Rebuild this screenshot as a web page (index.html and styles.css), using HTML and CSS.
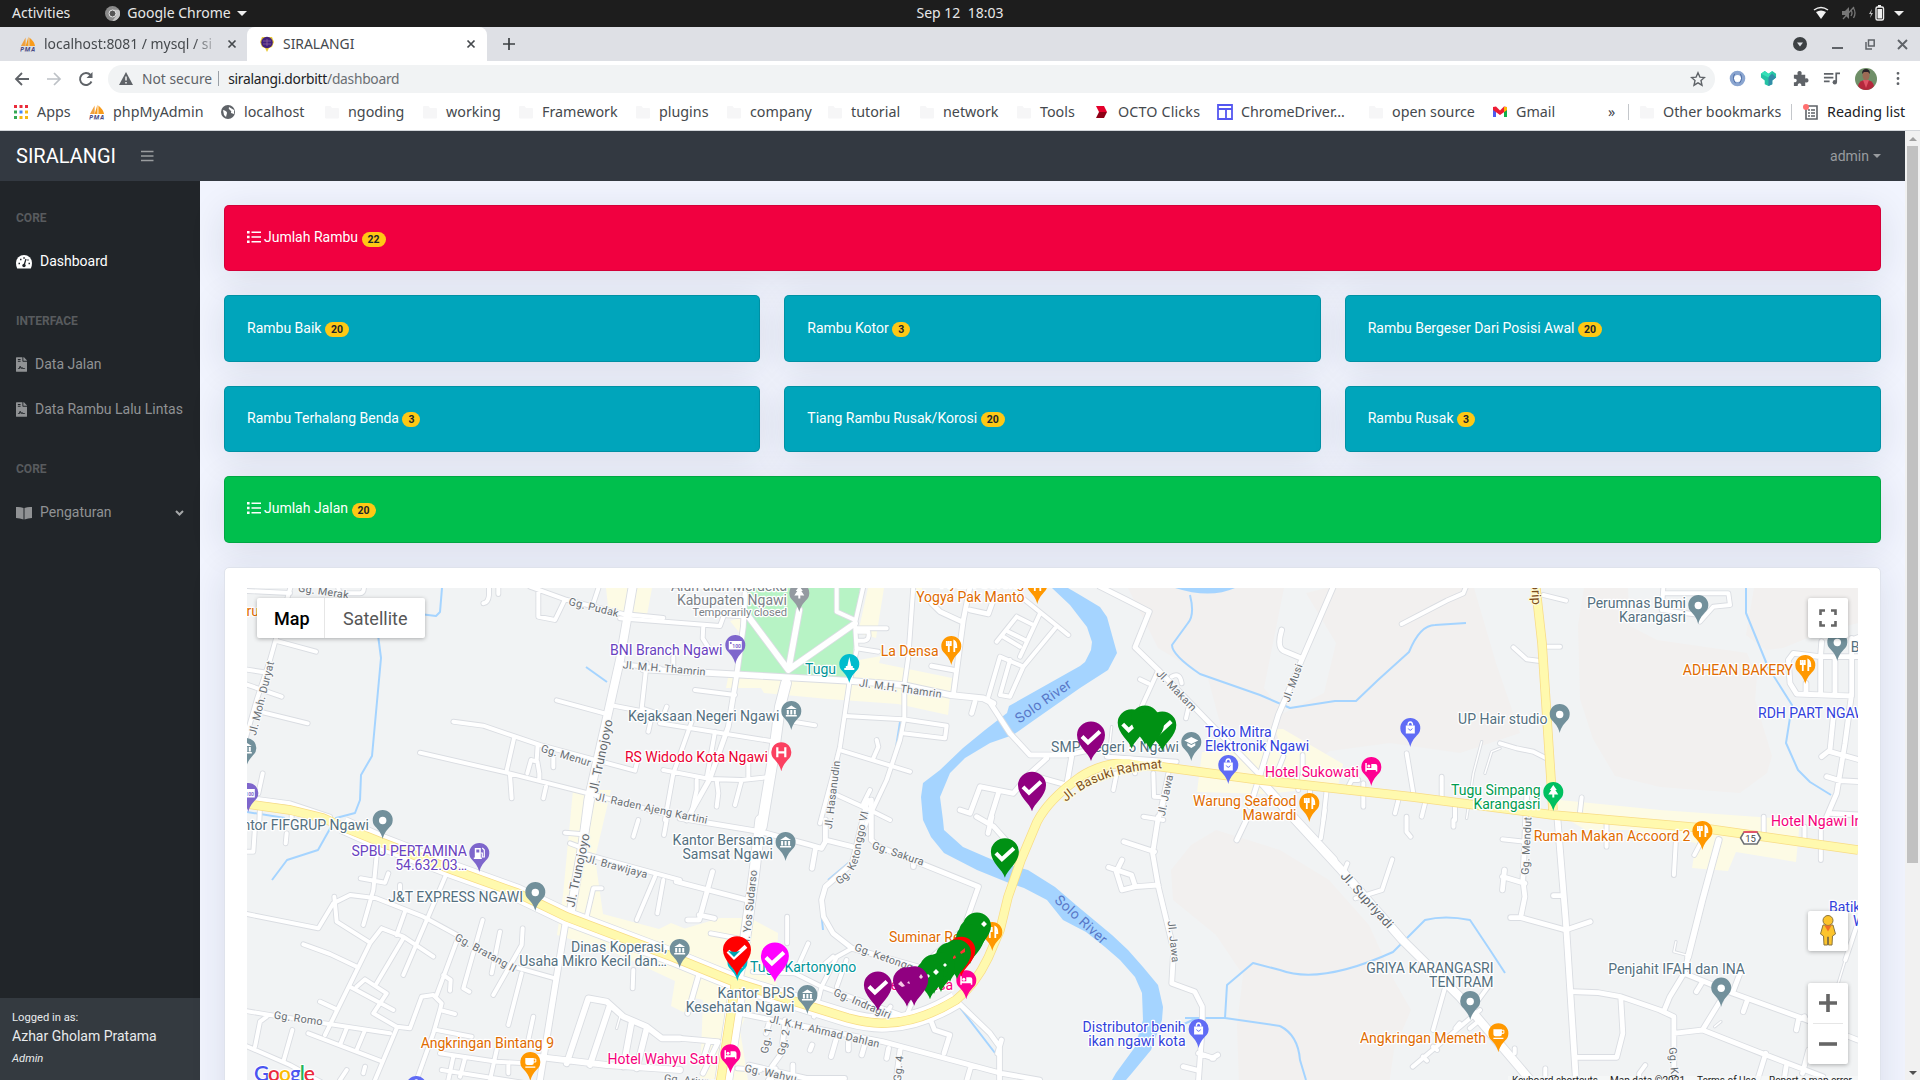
FILE: index.html
```html
<!DOCTYPE html>
<html lang="id">
<head>
<meta charset="utf-8">
<title>SIRALANGI</title>
<link rel="stylesheet" href="styles.css">
</head>
<body>
<svg class="defs" width="0" height="0">
  <defs>
    <symbol id="pma" viewBox="0 0 17 16"><path d="M1 10 6 1v9z" fill="#f0a040"/><path d="M6 10 9 0v10zM10 10V1q5 4 6 9z" fill="#f89c1c"/><text x="0" y="16" font-size="7" font-weight="700" font-style="italic" textLength="16" fill="#4a4a85" font-family="Open Sans, sans-serif">PMA</text></symbol>
    <symbol id="folder" viewBox="0 0 14 13"><path d="M0 1.5Q0 .5 1 .5h4.500l1.500 2h6q1 0 1 1V12q0 1-1 1H1q-1 0-1-1z" fill="#f6f6f7"/></symbol>
    <symbol id="cross" viewBox="0 0 10 10"><path d="M1.500 1.500l7 7m0-7l-7 7" stroke="currentColor" stroke-width="1.700"/></symbol>
    <symbol id="file" viewBox="0 0 384 512"><path fill="currentColor" d="M224 136V0H24C10.700 0 0 10.700 0 24v464c0 13.300 10.700 24 24 24h336c13.300 0 24-10.700 24-24V160H248c-13.200 0-24-10.800-24-24zM64 72c0-4.400 3.600-8 8-8h80c4.400 0 8 3.600 8 8v16c0 4.400-3.600 8-8 8H72c-4.400 0-8-3.600-8-8V72zm0 64c0-4.400 3.600-8 8-8h80c4.400 0 8 3.600 8 8v16c0 4.400-3.600 8-8 8H72c-4.400 0-8-3.600-8-8v-16zm192.800 248H304c8.800 0 16 7.200 16 16s-7.200 16-16 16h-47.200c-16.500 0-31.400-9.200-38.700-23.900-6-12.200-16.600-10.400-20.100 0l-4.600 15.300c-3.600 10.700-18.400 11.300-22.500 1.100L144 354.600l-16.200 48.500c-2.700 7.800-9.800 12.900-18 12.900H80c-8.800 0-16-7.200-16-16s7.200-16 16-16h20.200l19.800-60.500c8.800-24.300 42.300-24.300 49.800 0l13.900 41.700c21-17.100 54-9.900 66.400 14.800 1.300 2.500 3.800 4 6.700 4zM377 105 279.100 7c-4.500-4.500-10.600-7-17-7H256v128h128v-6.100c0-6.300-2.500-12.400-7-16.900z"/></symbol>
    <symbol id="list" viewBox="0 0 14 12"><path fill="currentColor" d="M0 0h2.600v2.600H0zM0 4.700h2.600v2.600H0zM0 9.400h2.600V12H0zM4.500.6H14v1.500H4.500zM4.500 5.300H14v1.500H4.500zM4.500 10H14v1.500H4.500z"/></symbol>
    <path id="pin" d="M0 0C-1.200-5-3-7.500-6.500-11.500A10 10 0 1 1 6.500-11.500C3-7.500 1.200-5 0 0z"/>
    <g id="p-dot"><use href="#pin"/><circle cy="-18.500" r="3.700" fill="#fff"/></g>
    <g id="p-food"><use href="#pin"/><path d="M-4.500-24v4h4v-4M-2.500-24v11M3-13v-11q2 1 2 6H3" fill="none" stroke="#fff" stroke-width="1.800"/></g>
    <g id="p-bank"><use href="#pin"/><path d="M-5.500-21 0-24.500 5.500-21zM-4.500-20h2v4.500h-2zM-1-20h2v4.500h-2zM2.500-20h2v4.500h-2zM-5.500-15h11v1.500h-11z" fill="#fff"/></g>
    <g id="p-bag"><use href="#pin"/><path d="M-4.500-21.500h9v8h-9z" fill="#fff"/><path d="M-2.300-21.500q0-3.500 2.300-3.500t2.300 3.500" fill="none" stroke="#fff" stroke-width="1.300"/><path d="M-2-18.500q2 3.500 4 0" fill="none" stroke="currentColor"/></g>
    <g id="p-bed"><use href="#pin"/><path d="M-6-23h1.500v5H0v-4h4q2 0 2 2v5.500H4.500V-16h-9v1.500H-6z" fill="#fff"/><circle cx="-2.500" cy="-20" r="1.500" fill="#fff"/></g>
    <g id="p-tree"><use href="#pin"/><path d="m0-26 3.500 5H2l3 4.500H1v3h-2v-3h-4L-2-21h-1.500z" fill="#fff"/></g>
    <g id="p-cup"><use href="#pin"/><path d="M-5-23h8.500v5q0 2-2 2h-4.500q-2 0-2-2zM-5-14.500h10v1.300H-5z" fill="#fff"/><path d="M3-22h2.500v3H3" fill="none" stroke="#fff"/></g>
    <g id="p-h"><use href="#pin"/><path d="M-4-24v10M4-24v10M-4-19h8" fill="none" stroke="#fff" stroke-width="2.200"/></g>
    <g id="p-tower"><use href="#pin"/><path d="m0-26 2 9h1.500v2H5v2H-5v-2h1.500v-2H-2z" fill="#fff"/></g>
    <g id="p-note"><use href="#pin"/><path d="M-6.500-23h13v8.500h-13z" fill="#fff"/><text x="-3" y="-16" font-size="5" font-weight="700" fill="currentColor">100</text><circle cx="-4.500" cy="-21" r="1" fill="currentColor"/></g>
    <g id="p-fuel"><use href="#pin"/><path d="M-4.500-24h6v9.500h-6zM-5.500-14.500h8v1.500h-8z" fill="#fff"/><path d="M1.500-19h1.500v4h2v-7l-2-2" fill="none" stroke="#fff" stroke-width="1.200"/><path d="M-3-22.500h3v3h-3z" fill="currentColor"/></g>
    <g id="p-school"><use href="#pin"/><path d="m0-24 7 3.500-7 3.500-7-3.500zM-4-18l4 2 4-2v2.500l-4 2.500-4-2.500z" fill="#fff"/></g>
    <path id="m" d="M0 0C-2-8-14-15-14-26A14 13.500 0 0 1 14-26C14-15 2-8 0 0z"/>
    <g id="mc"><use href="#m"/><path d="m-9-24.500 6 6L9-29.500" fill="none" stroke="#fff" stroke-width="4"/></g>

    <g id="roads">
      <g transform="translate(240 560) scale(.333333)">
        <path d="M0 92 150 99"/><path d="M152 80 90 300 50 420 10 560"/><path d="M110 243 228 275M15 328 80 338M10 370 125 410M60 455 203 490M68 640 55 700"/>
        <path d="M300 100H360Q372 100 372 80M747 80V105Q745 128 730 130M775 80V102M895 90V170L945 180 975 118M870 80 975 118 1150 162 1270 174M1075 85 1060 130M295 85 300 105"/>
        <path d="M950 421 1100 462M1110 435 1260 464M1220 310 1205 445 1250 460M1237 460 1225 515M640 485 730 497 900 555 1185 632 1195 590M540 578 800 638 1045 700 1260 758M822 535 800 632M810 645 815 715M893 555 890 600M940 590V622M862 640 873 600 892 605 898 640V660M918 680 910 715M1140 312 1260 325"/>
        <path class="w8" d="M1178 80 1140 300 1095 500 1045 720 1030 840"/>
        <path d="M35 715 150 730 270 770M60 740 58 785M155 750V790"/>
      </g>
      <g transform="translate(660 560) scale(.333333)">
        <path d="M-120 175 180 198 192 165 262 170M130 195 128 235 145 262"/>
        <path class="w5" d="M255 100 250 200 230 345 205 500 150 655 80 780"/>
        <path class="w6" d="M-50 328 240 344 560 362 730 375 870 405 970 415 1000 430"/>
        <path class="w6" d="M262 165 385 330 418 150M385 330 585 190"/>
        <path d="M530 80V155L585 180M610 80 585 190 590 270 568 370 540 560 520 640 480 790"/>
        <path d="M590 205H680M595 215H625Q630 240 612 242H595M590 265 655 275"/>
        <path class="w10" d="M378 370 360 440 340 590 305 800"/>
        <path d="M40 290V325M105 390 225 405M0 490 345 545M400 485 465 496M95 485 40 640 15 780M10 630 150 657 245 660 320 652M165 515 140 655M265 600V655M110 660 110 690 90 780M170 660 175 700 170 740M245 660 225 735M20 440 5 480"/>
        <path d="M760 80 745 290 733 375V475L720 540 680 660 600 830M555 468 730 478 860 497 855 535 730 520M545 572 750 635M650 540 655 560 640 595M520 700 640 755 690 780M630 690 610 730"/>
        <path class="w5" d="M930 80 910 180 880 405M815 318 880 330M935 460 945 425M815 130 840 155 905 185M930 150 985 162 1000 120"/>
        <path d="M1070 100 1225 225M1070 170 1010 245M1070 170 1120 195M1045 215 1095 240M1030 230 1080 260M1140 160 1080 290M1185 205 1090 320M1090 320 1020 290 985 410M1050 300 1020 405 1050 410 1090 320"/>
        <path class="w5" d="M985 420 1050 520 1110 585 1220 585 1290 570M1160 595 1110 640 1060 700 960 680 930 760 900 750M1015 700 990 780M1130 650 1220 675 1235 590"/>
      </g>
      <g transform="translate(1080 560) scale(.333333)">
        <path class="w5" d="M60 80 140 120 208 155 165 262 235 330 540 645"/>
        <path d="M235 330 185 440 170 480M180 358 205 370M275 350Q300 335 305 370M325 445 318 475"/>
        <path class="w5" d="M760 80 665 300 595 465 540 645 510 740M605 210Q590 260 610 272L665 295"/>
        <path d="M965 192 1100 122 1150 100 1158 80"/><path d="M80 590 290 605M80 650 110 640 100 690M160 615 165 640M220 640 222 710 255 712 235 780M265 640 235 780M190 770 250 780"/>
        <path class="w8" d="M540 660 620 750 760 900"/>
        <path d="M610 590 590 640M668 585V640M740 690 730 780M690 690V700M850 670V740M805 680 815 660H835M980 580 1000 700M1085 650V710M955 720 945 760M1035 730 1025 770M1125 730V780M650 640 655 690"/>
        <path class="w2" d="M1260 565 1235 575 1215 640M1205 545 1180 640 1160 775M95 500 85 590"/>
      </g>
      <g transform="translate(1500 560) scale(.333333)">
        <path d="M130 105 198 122M40 262 80 298 120 303M135 260H180M0 550 50 565 100 575 145 598M490 84 485 150 600 165M490 100H685L690 135 640 140 600 185M245 712 240 755"/>
        <path class="w5" d="M1080 290H960L880 280 865 300 870 370 890 402 1055 408M962 290V400M1005 290V400M962 285 965 245M1055 235V400L1035 550 1010 700 980 770M1000 470 990 570 965 590M990 575 1080 600M980 650 1020 662 1080 665M990 760 1080 765M1080 230 1055 240M918 370V400"/>
      </g>
      <g transform="translate(240 820) scale(.333333)">
        <path d="M45 20 40 95H0M140 40 137 70M412 85 400 210 370 315M362 175 435 188 445 160M480 195V230M283 230 290 305 390 368M0 278 235 325 280 250 330 225 410 235 550 290 660 350M820 440 945 475"/>
        <path d="M620 160 490 465M495 275 470 345M190 373 270 402 350 440M425 325 490 350 580 410M425 325 390 370 255 645M490 355 410 490M240 545 290 568M330 500 460 570M350 500 375 478 440 520 400 580M400 580 470 620 510 625 545 530 580 525 605 550 600 570 645 582M655 350 590 525M610 465 632 480 630 512M600 570 580 640 530 780"/>
        <path d="M728 300 670 505 688 515M780 335 755 460M848 325 845 375 760 525M845 460 805 615M880 590 865 660"/>
        <path d="M0 570 90 585 450 640M0 670 150 735 250 790M80 590 60 605 45 680M157 630 130 725M205 640 420 722M320 625 300 675M375 630 350 690M470 625 405 780M320 750 300 780M375 740 370 760M590 630 695 650M600 700 770 725 860 730M640 710 625 780M675 715 660 770M605 750 860 790M805 735V760M770 690 750 780"/>
        <path class="w6" d="M978 300 945 500 900 780"/><path class="w6" d="M890 710 1100 735 1320 750M980 730 1045 535 1100 545 1150 590 1220 620 1265 655H1320M1110 555 1050 735M1175 605 1150 740M1220 625 1190 745"/>
        <path class="w2" d="M1140 590 1130 625"/><path d="M1180 450 1178 505"/>
        <path class="w8" d="M1050-60 990 290"/><path d="M1040 290 1060 205H1085M975 38 1020 42M990 70 1030 85"/>
        <path d="M1030 100 1100 120 1320 180M1245 170 1190 300M1270 180 1252 280M1195 0 1180 50M1280 0 1272 45"/>
      </g>
      <g transform="translate(680 820) scale(.382667 .333333)">
        <path class="w5" d="M0-5 210 35 340 75 370 85 380 65V0M-10 185 175 240M85 155 50 300 20 300M50 285 90 295M355 80 345 145M380 60 450 80"/>
        <path class="w10" d="M210 0 195 150 165 400 150 480"/>
        <path class="w5" d="M490-60 450 130 380 200 370 240 375 290 400 340 450 385 620 440M500-60V60L520 80 780 200 740 330 650 420M610 120V140M775-10 820 20 890 110M805 40 815-10"/>
        <path d="M80 340 150 355M280 290V370M335 370 300 460M450 385 410 410 370 500 350 590M380 430 400 410M435 420 410 500M370 500 300 460 190 455M370 500 590 590 610 540M550 560 530 590"/>
        <path class="w5" d="M155 580 240 600 530 665 840 760 940 780M50 460 20 580M0 655 100 665 60 760M75 665 60 720M235 600 225 640M410 650 395 710M440 655V690M485 665 475 705M545 685 540 715M575 690 565 780M760 740 750 780M340 690 345 675"/>
        <path class="w5" d="M720 540 810 640 835 680V780M655 600 665 630 705 645 690 700M840 660 830 700M275 600 265 700 240 740 240 780M180 735 330 775 430 775M295 735V760"/>
        <path d="M365 520 355 560M250 745 230 780M150 745 210 750"/>
        <path class="w5" d="M1250-10 1235 100 1250 200 1290 390 1285 490 1345 515 1365 560V620L1355 780M1160 65 1240 95M1120 142 1180 165 1190 200 1250 195M1155 120 1140 155 1155 210 1190 200M1390 715 1405 705M1355 700 1395 715M1315 740 1350 750M1480 0 1455 60"/>
      </g>
      <g transform="translate(1280 820) scale(.408163 .333333)">
        <path class="w8" d="M0-50 150 150 300 360 440 530 620 790"/>
        <path d="M110-30 100 55M165 130 155 160M275 118 250 210 185 235M310-10V35L320 50M425 0V20M545 58 600 65"/>
        <path class="w5" d="M605-80 595 180 600 230 590 290M565 293 590 293 700 330 760 305M550 150 545 210M545 170 600 190"/>
        <path class="w6" d="M680 0 700 300 725 780"/><path class="w5" d="M670 227H695M715 515 780 518 835 530 930 570 965 590 965 780M835 535 840 640 825 712H725M965 640 1035 630 1180 700 1330 770M1080 540 1035 630M990 460 955 530 940 575M1000 410 990 460 1110 520 1280 595 1415 660M1035 485 1020 515M1110 515 1130 450M1145 540 1135 575M1285 590 1270 600 1265 630M1190 700 1170 780M1240 740 1235 780M1295 690 1280 760"/>
        <path class="w6" d="M1075 60 1035 240 1000 410"/><path d="M970 60 965 165M1030 70 1015 105M800 10V80M1185-10V40M1285 20V60M1325 20V120M1415 310 1385 420"/>
        <path class="w2" d="M970 365 965 395 995 405M1385 420 1365 500M1065 620 1080 605"/>
        <path d="M405 500 375 630M490 570 325 740M510 500 480 550M440 610 430 625M375 680 385 690M350 710 360 722M490 600 465 625M575 685V700M650 745V780M895 735 880 760V780"/>
      </g>
    </g>
    <path id="hw" d="M247 804 290 810 323 818 343 827 383 843 453 870 517 893 567 917 673 957 737 983 806 1005 848 1018Q870 1024 887 1023 920 1022 956 1000 975 985 988 958L1000 930 1008 897 1021 860 1037 822Q1048 800 1080 777 1100 764 1123 763L1163 767 1260 780 1413 797 1553 815 1702 828 1858 850M1535 580 1542 643 1553 810M736 980 720 1085"/>
    <path id="dual" d="M343 825 383 843 453 870 517 893 567 917 673 957 737 983 806 1005 848 1018Q870 1024 887 1023 920 1022 956 1000M739 980 723 1085"/>
    <path id="kv" d="M839 885Q859 872 861 846L872 796"/>
    <path id="br" d="M1066 802Q1098 772 1164 768"/>
  </defs>
</svg>

<header class="topbar">
  <div class="topbar-left"><span>Activities</span><svg class="chrome-ico" viewBox="0 0 16 16"><circle cx="8" cy="8" r="8" fill="#8a8a8a"/><path d="M8 4h7A8 8 0 0 1 8 16l4-6z" fill="#c4c4c4"/><circle cx="8" cy="8" r="3.700" fill="#555" stroke="#eee"/></svg><span>Google Chrome</span><i class="caret"></i></div>
  <span class="clock">Sep 12&nbsp; 18:03</span>
  <div class="topbar-right">
    <svg width="16" height="14"><path d="M1 4q7-5 14 0" fill="none" stroke="#eee" stroke-width="1.500"/><path d="M3 6q5-3 10 0l-5 7z" fill="#f2f2f2"/></svg>
    <svg width="16" height="14"><path d="M1 5h3l4-4v12L4 9H1z" fill="#777"/><path d="M10 4q2 3 0 6M12.500 2q3 5 0 10M13 1 2 13" fill="none" stroke="#777" stroke-width="1.300"/></svg>
    <svg width="16" height="16"><path d="M3 4 0 9h2l-1 4 3-5H2z" fill="#bbb"/><rect x="7" y="2" width="7.500" height="13" rx="1.500" fill="none" stroke="#eee" stroke-width="1.400"/><path d="M9 0h3v2H9zM8.500 4h4.500v9.500H8.500z" fill="#eee"/></svg>
    <i class="caret"></i>
  </div>
</header>

<div class="tabs">
  <div class="tab tab-a"><svg class="fav" viewBox="0 0 17 16"><use href="#pma"/></svg><span class="tab-name fade">localhost:8081 / mysql / si</span><svg class="x"><use href="#cross"/></svg></div>
  <div class="tab tab-b"><svg class="fav" viewBox="0 0 16 16"><path d="M3 1h10l2 5-2 5-3 1-2 4-2-4-3-1-2-5z" fill="#e9c936"/><circle cx="8" cy="6.500" r="5.800" fill="#41207c"/><path d="M4 5h8M4 8h8M8 3v7" stroke="#9a6ba0" stroke-width=".7"/></svg><span class="tab-name">SIRALANGI</span><svg class="x"><use href="#cross"/></svg></div>
  <svg class="plus" viewBox="0 0 12 12"><path d="M6 0v12M0 6h12" stroke="#3c4043" stroke-width="1.700"/></svg>
  <div class="wins">
    <svg width="14" height="14"><circle cx="7" cy="7" r="7" fill="#3c4043"/><path d="M4 5.500h6L7 9.500z" fill="#dee1e6"/></svg>
    <svg width="11" height="14"><path d="M0 11h11" stroke="#5f6368" stroke-width="2"/></svg>
    <svg width="10" height="11"><path d="M3.500 1h5.700v6H3.500zM1 3v7h6" fill="none" stroke="#5f6368" stroke-width="1.500"/></svg>
    <svg width="11" height="11"><path d="m1 1 9 9m0-9-9 9" stroke="#5f6368" stroke-width="1.900"/></svg>
  </div>
</div>

<div class="addr">
  <svg class="nav" viewBox="0 0 16 16"><path d="M15 8H2M8 2 2 8l6 6" fill="none" stroke="#5f6368" stroke-width="1.800"/></svg>
  <svg class="nav" viewBox="0 0 16 16"><path d="M1 8h13M8 2l6 6-6 6" fill="none" stroke="#bdc1c6" stroke-width="1.700"/></svg>
  <svg class="nav" viewBox="0 0 16 16"><path d="M13.500 10.500A6 6 0 1 1 12.500 4" fill="none" stroke="#5f6368" stroke-width="1.900"/><path d="M14.500 1v6h-6z" fill="#5f6368"/></svg>
  <div class="omni">
    <svg width="14" height="13"><path d="M7 0l7 13H0z" fill="#5f6368"/><path d="M7 4.500v4M7 10v1.500" stroke="#fff" stroke-width="1.400"/></svg>
    <span class="ns">Not secure</span><i class="bar"></i><span class="url">siralangi.dorbitt<em>/dashboard</em></span>
    <svg class="star" viewBox="0 0 16 16"><path d="m8 1.800 1.900 4.300 4.600.4-3.500 3.100 1 4.600L8 11.800l-4 2.400 1-4.600L1.500 6.500l4.600-.4z" fill="none" stroke="#5f6368" stroke-width="1.400"/></svg>
  </div>
  <div class="exts">
    <svg viewBox="0 0 18 18"><circle cx="9" cy="9" r="6" fill="none" stroke="#8aa5d0" stroke-width="4.500"/><path d="M6 4q-3 5 1 10M12 4q3 5-1 10" fill="none" stroke="#4c6ca5"/></svg>
    <svg viewBox="0 0 18 18"><path d="M1 4 5 1l4 3 4-3 4 3v4l-4 3v4l-4 2-4-2v-4L1 8z" fill="#25c3a5"/><path d="m9 7 4-3 4 4-4 3v4l-4 2z" fill="#338ca8"/><path d="M1 4 5 1l4 3 4-3-4 7z" fill="#35e0b8"/></svg>
    <svg viewBox="0 0 18 18"><path d="M2 5h4q-1-4 2-4t2 4h4v4q3.500-1 3.500 2T14 13v4h-4q0-3-2-3t-2 3H2v-4q3 0 3-2T2 9z" fill="#5f6368"/></svg>
    <svg viewBox="0 0 18 18"><path d="M1 4h10M1 8h10M1 12h6M14 13V3.500h4" fill="none" stroke="#5f6368" stroke-width="1.800"/><circle cx="12.500" cy="13" r="2.300" fill="#5f6368"/></svg>
    <svg class="avatar" viewBox="0 0 22 22"><circle cx="11" cy="11" r="11" fill="#6f8f68"/><path d="M3 18q1-6 8-6t8 6q-3 4-8 4t-8-4z" fill="#b5283c"/><path d="m8 12 3 8 3-8z" fill="#e05366"/><ellipse cx="11" cy="7.500" rx="3.500" ry="4.800" fill="#9c6b55"/><path d="M7 6q0-5 4-5t4 5l-2-2H9z" fill="#2a2329"/></svg>
    <svg viewBox="0 0 12 18"><path d="M6 3.500h0M6 9h0M6 14.500h0" stroke="#5f6368" stroke-width="3" stroke-linecap="round"/></svg>
  </div>
</div>

<nav class="marks">
  <div><svg viewBox="0 0 14 14"><path d="M0 0h3v3H0zM5.500 0h3v3h-3zM11 0h3v3h-3z" fill="#ea2b3a"/><path d="M0 5.500h3v3H0z" fill="#34a853"/><path d="M5.500 5.500h3v3h-3z" fill="#4285f4"/><path d="M11 5.500h3v3h-3zM5.500 11h3v3h-3zM11 11h3v3h-3z" fill="#f5b912"/><path d="M0 11h3v3H0z" fill="#34a853"/></svg>Apps</div>
  <div><svg viewBox="0 0 17 16"><use href="#pma"/></svg>phpMyAdmin</div>
  <div><svg viewBox="0 0 14 14"><circle cx="7" cy="7" r="7" fill="#5f6368"/><path d="M2 5q4 1 4 3l-1 4-2-2zM8 2q-1 2 1 3t1 3l3 1V5z" fill="#fff"/></svg>localhost</div>
  <div><svg><use href="#folder"/></svg>ngoding</div>
  <div><svg><use href="#folder"/></svg>working</div>
  <div><svg><use href="#folder"/></svg>Framework</div>
  <div><svg><use href="#folder"/></svg>plugins</div>
  <div><svg><use href="#folder"/></svg>company</div>
  <div><svg><use href="#folder"/></svg>tutorial</div>
  <div><svg><use href="#folder"/></svg>network</div>
  <div><svg><use href="#folder"/></svg>Tools</div>
  <div><svg viewBox="0 0 14 14"><path d="M1 1h8l3 6H4z" fill="#e4002b"/><path d="M4 7h8l-3 6H1z" fill="#8e0016"/></svg>OCTO Clicks</div>
  <div><svg viewBox="0 0 16 16"><path d="M1 1h14v14H1zM1 5h14M9 5v10" fill="none" stroke="#5457f0" stroke-width="1.800"/></svg>ChromeDriver…</div>
  <div><svg><use href="#folder"/></svg>open source</div>
  <div><svg viewBox="0 0 14 14"><path d="M0 2h3v10H0z" fill="#4f5cf0"/><path d="M11 2h3v10h-3z" fill="#10b04a"/><path d="m0 2 3-.5 4 4 4-4 3 .5v3L7 10 0 5z" fill="#ee1c35"/><path d="M11 2h3v3l-3 2z" fill="#fbbc04"/></svg>Gmail</div>
  <div class="more">»</div>
  <div class="sep"><svg><use href="#folder"/></svg>Other bookmarks</div>
  <div class="sep reading"><svg viewBox="0 0 16 16"><path d="M3 2h11v13H3z" fill="none" stroke="#5f6368" stroke-width="1.600"/><path d="M5 6h2M8 6h4M5 9h2M8 9h4M5 12h2M8 12h4" stroke="#5f6368" stroke-width="1.500"/><circle cx="3" cy="3" r="3" fill="#ff7070"/></svg>Reading list</div>
</nav>

<div class="view">
  <div class="page">
    <header class="appbar"><span class="brand">SIRALANGI</span><svg width="13" height="13"><path d="M0 1.500h12.500M0 6h12.500M0 10.500h12.500" stroke="#9a9d9f" stroke-width="1.500"/></svg><span class="user">admin<i class="dd"></i></span></header>
    <div class="body">
      <aside class="side">
        <h6>CORE</h6>
        <a class="on"><svg width="16" height="14" viewBox="0 0 16 14"><path d="M0 8a8 8 0 0 1 16 0q0 3-1.200 5.500H1.200Q0 11 0 8z" fill="#fff"/><path d="M8 10.500 10 4" stroke="#212529" stroke-width="1.300"/><circle cx="8" cy="10.500" r="1.700" fill="#212529"/><path d="M2.500 8.500h1.500M12.500 8.500h1.500M4 4.500h1.500M7.300 3h1.500M11.500 5h1" stroke="#212529" stroke-width="1.500"/></svg>Dashboard</a>
        <h6>INTERFACE</h6>
        <a><svg width="11" height="15"><use href="#file"/></svg>Data Jalan</a>
        <a><svg width="11" height="15"><use href="#file"/></svg>Data Rambu Lalu Lintas</a>
        <h6>CORE</h6>
        <a><svg width="16" height="14" viewBox="0 0 16 14"><path d="M0 1q4-.5 7.500 1v11.500Q4 12 0 12zM16 1q-4-.5-7.500 1v11.500Q12 12 16 12z" fill="currentColor"/></svg>Pengaturan<svg class="chev" width="9" height="8"><path d="m1 2 3.500 3.500L8 2" fill="none" stroke="#a5a7a8" stroke-width="2"/></svg></a>
        <footer><small>Logged in as:</small><span>Azhar Gholam Pratama</span><small><em>Admin</em></small></footer>
      </aside>
      <main>
        <div class="card red"><svg width="14" height="12"><use href="#list"/></svg>Jumlah Rambu <b>22</b></div>
        <div class="card">Rambu Baik <b>20</b></div><div class="card">Rambu Kotor <b>3</b></div><div class="card">Rambu Bergeser Dari Posisi Awal <b>20</b></div>
        <div class="card">Rambu Terhalang Benda <b>3</b></div><div class="card">Tiang Rambu Rusak/Korosi <b>20</b></div><div class="card">Rambu Rusak <b>3</b></div>
        <div class="card green"><svg width="14" height="12"><use href="#list"/></svg>Jumlah Jalan <b>20</b></div>
        <section class="mapcard"><div class="map">
<svg class="canvas" viewBox="247 588 1611 492" width="1611" height="492">
  <rect x="247" y="588" width="1611" height="492" fill="#f1f3f4"/>
  <g fill="#f2f0ef">
    <path d="M1152 588h132l-12 60-8 40 20 25 40-20 12-50-30-50 20-5h148l22 75 24 70-60 20-70-10-60 8-20 14-30-22-60-20-12-45-50-30-30-60z"/>
    <path d="M1584 588h44l2 38 27 14 90 13 10 24-2 23 17 56-5 17-27 20-80-6-45-11-22-37-13-40-2-74zM1754 588h104v35l-38 10-37 15-17 2-20-15z"/>
    <path d="M1216 830l-25 15-20 25 2 30 43 35 27 40-6 50 2 60h150l5-35 17-40-17-30-25-55-40-45-49-30z"/>
  </g>
  <g fill="#fdfbe5">
    <path d="M606 588h46l-5 27h-38zM730 621l15-5-3 20zM868 588h16l-8 50-18-5zM912 588h10v3zM859 660l22-4-2 7 73 15-4 37-50-11-70-5-64-6-3-5h-35l3-15z"/>
    <path d="M573 790h38l-16 68 8 56 56 15 12-6 20 8v85l-20-10 4-25-60-28-58-18 6-40zM680 930l40-12h30l28 15-2 60 20 15-48 2-8 20 8 50h-48l3-80-23-5z"/>
    <path d="M1202 752l78-8-5-15h8l60 35-5 22-70 8-71-2zM1560 800l100 10 140 10-4 42-60-10-8 19-36-3 4-25-50-10-14-3h-46l-35-20z"/>
  </g>
  <path fill="#b7f3c5" d="M748 588h112l-10 95-105-8-8-6z"/>
  <path fill="#a5d4ff" d="M1068 588 1080 595 1100 607 1107 617 1117 653 1108 670 1080 688 1030 723 1013 735 990 743 965 758 950 773 940 797 943 820 944 830 963 847 986 857 998 862 1028 870 1055 887 1076 905 1112 935 1128 950 1143 967 1158 985 1163 1007 1162 1020 1151 1050 1132 1073 1126 1080H1112L1116 1073 1135 1047 1143 1020 1142 993 1135 977 1120 960 1105 947 1086 932 1063 920 1047 900 1024 888 1009 883 977 870 944 853 931 837 923 820 921 797 923 783 940 770 963 748 985 730 1007 713 1009 706 1080 666 1085 662 1091 650 1092 642 1087 627 1080 618 1070 605 1052 588zM1175 588q35 11 60 0z"/>
  <g class="stream">
    <path d="M442 588 440 612 436 616 420 614M378 635 381 658 372 756 361 775 360 800 355 813 336 818 318 850 287 860 272 880M586 667 607 682M913 588 908 650M900 722 894 760M247 812 285 818"/>
    <path d="M1190 595Q1195 615 1188 623L1172 645Q1172 655 1200 674L1260 695 1290 708 1335 701 1356 701 1378 680 1409 652Q1420 625 1435 625L1466 623"/>
    <path d="M1746 588V613L1768 667 1792 705 1786 743 1798 770 1810 782 1831 795"/>
    <path d="M1185 1018H1225L1280 1026M1225 1018 1227 985 1253 963 1280 970Q1320 985 1393 952L1425 920Q1445 915 1470 920L1490 950 1505 973M1280 1026Q1298 1035 1300 1060L1306 1080M1184 1024 1197 1018M829 930 847 947M958 1005 995 1053M852 860 828 880M821 910 823 930"/>
  </g>
  <use href="#roads" class="casing"/>
  <use href="#dual" class="dual-c"/>
  <use href="#roads" class="paved"/>
  <use href="#dual" class="dual-f"/>
  <use href="#hw" class="hw-c"/><use href="#hw" class="hw-f"/>
  <path d="M1112 757 1130 758 1162 763" stroke="#fff" stroke-width="3" fill="none"/>
  <g class="st">
    <text transform="translate(323 595) rotate(8)">Gg. Merak</text><text transform="translate(593 611) rotate(14)">Gg. Pudak</text>
    <text transform="translate(265 699) rotate(-76)">Jl. Moh. Duryat</text><text transform="translate(664 672) rotate(5)">Jl. M.H. Thamrin</text>
    <text transform="translate(900 692) rotate(8)">Jl. M.H. Thamrin</text><text transform="translate(836 795) rotate(-83)">Jl. Hasanudin</text>
    <text class="b" transform="translate(605 757) rotate(-78)">Jl. Trunojoyo</text><text class="b" transform="translate(582 871) rotate(-78)">Jl. Trunojoyo</text>
    <text transform="translate(565 759) rotate(17)">Gg. Menur</text><text transform="translate(651 812) rotate(12)">Jl. Raden Ajeng Kartini</text>
    <text transform="translate(616 870) rotate(15)">Jl. Brawijaya</text><text transform="translate(484 956) rotate(29)">Gg. Bratang II</text>
    <text transform="translate(298 1022) rotate(8)">Gg. Romo</text><text transform="translate(753 909) rotate(-84)">Jl. Yos Sudarso</text>
    <text class="start"><textPath href="#kv">Gg. Ketonggo VI</textPath></text><text transform="translate(897 857) rotate(19)">Gg. Sakura</text>
    <text transform="translate(892 964) rotate(20)">Gg. Ketonggo VI</text><text transform="translate(861 1007) rotate(23)">Gg. Indragiri</text>
    <text transform="translate(824 1035) rotate(13)">Jl. K.H. Ahmad Dahlan</text><text transform="translate(770 1041) rotate(-80)">Gg. 1</text><text transform="translate(787 1043) rotate(-78)">Gg. 2</text><text transform="translate(902 1069) rotate(-84)">Gg. 4</text>
    <text transform="translate(770 1077) rotate(12)">Gg. Wahyu</text><text transform="translate(690 1084) rotate(5)">Gg. Arjuno</text>
    <text transform="translate(1174 693) rotate(46)">Jl. Makam</text><text transform="translate(1296 684) rotate(-70)">Jl. Musi</text><text transform="translate(1169 796) rotate(-78)">Jl. Jawa</text><text transform="translate(1170 942) rotate(84)">Jl. Jawa</text>
    <text class="b" transform="translate(1364 903) rotate(48)">Jl. Supriyadi</text><text transform="translate(1530 846) rotate(-87)">Gg. Mendut</text><text transform="translate(1671 1075) rotate(86)">Gg. Kresno</text>
    <text class="hwt start"><textPath href="#br">Jl. Basuki Rahmat</textPath></text><text class="hwt" transform="translate(1530 559) rotate(87)">Jl. Urip Sumorip</text>
    <text class="rv" transform="translate(1046 705) rotate(-35)">Solo River</text><text class="rv" transform="translate(1078 923) rotate(42)">Solo River</text>
  </g>
  <g class="poi">
    <g class="gray"><use href="#p-tree" x="799.300" y="612"/><g class="e"><text x="787" y="591">Alun-alun Merdeka</text><text x="787" y="605">Kabupaten Ngawi</text><text class="s" x="787" y="616">Temporarily closed</text></g></g>
    <g class="orange"><use href="#p-food" x="1037.300" y="604"/><use href="#p-food" x="951.300" y="665"/><use href="#p-food" x="1309.300" y="822"/><use href="#p-food" x="1805.300" y="684"/><use href="#p-cup" x="530.300" y="1081"/><use href="#p-food" x="992.300" y="951"/><use href="#p-cup" x="1498.400" y="1052.300"/><use href="#p-food" x="1702.400" y="850"/>
      <g class="e"><text x="1024.500" y="588">Ayam Goreng</text><text x="1024.500" y="602">Yogya Pak Manto</text><text x="938.500" y="656">La Densa</text><text x="1296.500" y="806">Warung Seafood</text><text x="1296.500" y="820">Mawardi</text><text x="1793" y="675">ADHEAN BAKERY</text><text x="554" y="1048">Angkringan Bintang 9</text><text x="1486" y="1043">Angkringan Memeth</text><text x="1690.500" y="841">Rumah Makan Accoord 2</text><text x="259" y="616">Waru</text></g><text x="889" y="942">Suminar Resto</text></g>
    <g class="purple"><use href="#p-note" x="735.300" y="664"/><use href="#p-note" x="248.300" y="812"/><use href="#p-fuel" x="479.300" y="872"/><g class="e"><text x="722.500" y="655">BNI Branch Ngawi</text><text x="467" y="856">SPBU PERTAMINA</text><text x="467" y="870">54.632.03…</text></g></g>
    <g class="teal"><use href="#p-tower" x="849.300" y="683"/><use href="#p-tower" x="737.400" y="981"/><text class="end" x="836" y="674">Tugu</text><text x="750" y="972">Tugu Kartonyono</text></g>
    <g class="red-p"><use href="#p-h" x="781.300" y="771.300"/><text class="end" x="768" y="762">RS Widodo Kota Ngawi</text></g>
    <g class="slate"><use href="#p-bank" x="791.300" y="730"/><use href="#p-school" x="1191.300" y="761"/><use href="#p-dot" x="1698.300" y="624"/><use href="#p-dot" x="1837.300" y="661"/><use href="#p-dot" x="1559.700" y="733"/><use href="#p-bank" x="246.300" y="767"/><use href="#p-dot" x="382.700" y="839"/><use href="#p-dot" x="535.300" y="911"/><use href="#p-bank" x="679.700" y="968"/><use href="#p-bank" x="785.600" y="861"/><use href="#p-bank" x="807.400" y="1014"/><use href="#p-dot" x="1470.200" y="1020"/><use href="#p-dot" x="1721.200" y="1006.700"/>
      <g class="e"><text x="779.500" y="721">Kejaksaan Negeri Ngawi</text><text x="1179" y="752">SMP Negeri 5 Ngawi</text><text x="1686" y="608">Perumnas Bumi</text><text x="1686" y="622">Karangasri</text><text x="1547.500" y="724">UP Hair studio</text><text x="369" y="830">Kantor FIFGRUP Ngawi</text><text x="523" y="902">J&amp;T EXPRESS NGAWI</text><text x="667" y="952">Dinas Koperasi,</text><text x="667" y="966">Usaha Mikro Kecil dan…</text><text x="773" y="845">Kantor Bersama</text><text x="773" y="859">Samsat Ngawi</text><text x="794.500" y="998">Kantor BPJS</text><text x="794.500" y="1012">Kesehatan Ngawi</text><text x="1493.500" y="973">GRIYA KARANGASRI</text><text x="1493.500" y="987">TENTRAM</text><text x="1745" y="974">Penjahit IFAH dan INA</text></g><text x="1850.700" y="652">Bale</text></g>
    <g class="blue"><use href="#p-bag" x="1228.300" y="784"/><use href="#p-bag" x="1410.300" y="747"/><use href="#p-bag" x="416.300" y="1105"/><use href="#p-bag" x="1198.600" y="1048"/><text x="1205" y="737">Toko Mitra</text><text x="1205" y="751">Elektronik Ngawi</text><text x="1758" y="718">RDH PART NGAWI</text><text x="1829" y="912">Batik</text><text x="1853" y="926">W</text><g class="e"><text x="1185.500" y="1032">Distributor benih</text><text x="1185.500" y="1046">ikan ngawi kota</text></g></g>
    <g class="pink"><use href="#p-bed" x="1371.300" y="786"/><use href="#p-bed" x="730.500" y="1073.300"/><use href="#p-bed" x="966.300" y="999.300"/><g class="e"><text x="1359" y="777">Hotel Sukowati</text><text x="718" y="1064">Hotel Wahyu Satu</text><text x="953" y="990">Hotel Nuansa</text></g><text x="1771" y="826">Hotel Ngawi Indah</text></g>
    <g class="grn"><use href="#p-tree" x="1553.300" y="811"/><g class="e"><text x="1540.500" y="795">Tugu Simpang</text><text x="1540.500" y="809">Karangasri</text></g></g>
  </g>
  <path d="M1744 832h13l3.500 6-3.500 6h-13l-3.500-6z" fill="#fff" stroke="#6c6f73" stroke-width="1.500"/><path d="M1744 831h13l1 2h-15z" fill="#e0556a"/><text x="1750.500" y="841.500" font-size="9.500" text-anchor="middle" fill="#444">15</text>
  <g fill="#900080"><use href="#mc" x="1032" y="811.300"/><use href="#mc" x="1091" y="761"/></g>
  <g fill="#009114"><use href="#mc" x="1131.700" y="748.700"/><use href="#mc" x="1162.300" y="751"/><use href="#m" x="1145" y="745"/><use href="#m" x="1150" y="750"/><use href="#mc" x="1004.900" y="877.700"/></g>
  <use href="#mc" x="737" y="975.700" fill="#f00"/><path d="m728 951 6 6 6-6-5 1z" fill="#009fae"/><use href="#mc" x="774.900" y="982" fill="#f0f"/>
  <g fill="#009114"><use href="#m" x="977" y="952"/><use href="#m" x="973" y="958"/><use href="#m" x="970" y="964"/></g>
  <use href="#m" x="961.300" y="976.300" fill="#f00"/>
  <g fill="#009114"><use href="#m" x="957" y="979"/><use href="#m" x="950" y="982"/><use href="#m" x="941" y="992"/><use href="#m" x="934" y="994"/><use href="#m" x="930" y="999.300"/></g>
  <g fill="#fff"><path d="m984 921 3 3-3 3-3-3zM936 969l3 3-3 3-3-3zM945 963l2 2-2 2-2-2zM928 974l2 2-2 2-2-2z"/></g><path d="m953 957 2-2 1 3-3 1zM960 952l5-4v4l-4 2z" fill="#f33"/>
  <g fill="#900080"><use href="#mc" x="877.900" y="1011"/><use href="#m" x="914.200" y="1005.700"/><use href="#m" x="907" y="1006.700"/></g><path d="m898 984 3-3 4 5-3 1zM907 983l2-2 1 3zM921 974l2 3-2 2-2-2z" fill="#f5c8e5"/>
  <g class="glogo"><text x="254" y="1081" textLength="61"><tspan fill="#4a55f0">G</tspan><tspan fill="#ea2a3c">o</tspan><tspan fill="#fbbc04">o</tspan><tspan fill="#4a55f0">g</tspan><tspan fill="#22b45a">l</tspan><tspan fill="#ea2a3c">e</tspan></text></g>
  <rect x="1508" y="1076" width="350" height="6" fill="#f7f8f8" opacity=".7"/>
  <g class="legal"><text x="1512" y="1084" textLength="86">Keyboard shortcuts</text><text x="1610" y="1084" textLength="75">Map data ©2021</text><text x="1697" y="1084" textLength="59">Terms of Use</text><text x="1769" y="1084" textLength="83">Report a map error</text></g>
</svg>
          <div class="types"><span class="cur">Map</span><span>Satellite</span></div>
          <div class="ctl full"><svg width="18" height="18"><path d="M1.500 6V1.500H6M12 1.500h4.500V6M16.500 12v4.500H12M6 16.500H1.500V12" fill="none" stroke="#666" stroke-width="2.600"/></svg></div>
          <div class="ctl man"><svg width="18" height="32"><path d="M4 10h10l2.500 9-3 2L13 30H9.500v-8h-1v8H5l-.5-9-3-2z" fill="#fcc42c" stroke="#8a7440" stroke-width="1"/><circle cx="9" cy="5.500" r="5" fill="#fcc42c" stroke="#8a7440"/><path d="M5.500 10.500h7l-3.500 6z" fill="#f07028"/></svg></div>
          <div class="ctl zoom"><svg width="18" height="18"><path d="M9 0v18M0 9h18" stroke="#666" stroke-width="3.600"/></svg><i></i><svg width="18" height="18"><path d="M0 9h18" stroke="#666" stroke-width="3.600"/></svg></div>
        </div></section>
      </main>
    </div>
  </div>
  <div class="scroll"><i class="up"></i><div class="thumb"></div><i class="down"></i></div>
</div>
</body>
</html>
```
FILE: styles.css
```css
* { box-sizing: border-box; }
body { margin: 0; height: 1080px; overflow: hidden; font: 14px/21px Roboto, sans-serif; background: #fff; display: flex; flex-direction: column; }
.defs { position: absolute; }
i { display: block; }
svg { flex: none; display: block; }
.topbar, .tabs, .addr, .marks { font-family: "Noto Sans", "Open Sans", sans-serif; flex: none; }

.topbar { height: 27px; background: #1d1d1d; color: #e8e8e8; display: grid; grid-template-columns: 1fr auto 1fr; align-items: center; font-size: 14px; line-height: 26px; padding: 0 16px 1px 12px; }
.topbar-left { display: flex; align-items: center; }
.chrome-ico { width: 15px; height: 15px; margin: 0 7px 0 35px; }
.topbar-left .caret { margin-left: 6px; }
.clock { margin-left: 4px; }
.caret { border: 5px solid transparent; border-top-color: #eee; border-bottom: 0; }
.topbar-right { display: flex; justify-content: flex-end; align-items: center; gap: 12px; }
.topbar-right .caret { margin-left: -3px; }

.tabs { height: 34px; background: #dee0e5; display: flex; align-items: center; color: #45494d; }
.tab { height: 34px; display: flex; align-items: center; padding-bottom: 1px; }
.tab-a { width: 247px; padding: 0 10px 1px 20px; }
.tab-b { width: 240px; background: #fff; border-radius: 8px 8px 0 0; padding: 0 11px 1px 12px; }
.fav { width: 16px; height: 16px; margin-right: 8px; }
.tab-name { flex: 1; overflow: hidden; white-space: nowrap; font-size: 13.900px; }
.fade { mask-image: linear-gradient(90deg, #000 85%, transparent); }
.x { width: 10px; height: 10px; margin-left: 7px; }
.plus { width: 12px; height: 12px; margin-left: 16px; }
.wins { margin-left: auto; display: flex; align-items: center; gap: 22px; padding-right: 12px; }
.wins svg:first-child { margin-right: 3px; }

.addr { height: 36px; display: flex; align-items: center; padding: 0 16px 1px 14px; font-size: 13.800px; }
.nav { width: 16px; height: 16px; margin-right: 16px; }
.omni { flex: 1; height: 28px; background: #f1f3f4; border-radius: 14px; display: flex; align-items: center; padding: 0 9px 0 11px; margin-left: -2px; color: #5f6368; }
.ns { margin-left: 9px; }
.bar { width: 1px; height: 15px; background: #9aa0a6; margin: 0 9px 0 6px; }
.url { color: #202124; letter-spacing: -.27px; }
.url em { font-style: normal; color: #6b6f73; }
.star { width: 16px; height: 16px; margin-left: auto; }
.exts { display: flex; align-items: center; gap: 14.500px; padding-left: 14px; }
.exts svg { width: 17px; height: 17px; }
.exts .avatar { width: 22px; height: 22px; }
.exts svg:last-child { width: 12px; margin-left: 1px; }

.marks { height: 34px; border-bottom: 1px solid #d3d6da; display: grid; padding: 0 0 4px 14px; align-items: center; color: #45494d; font-size: 14.300px; white-space: nowrap;
  grid-template-columns: 75px 132px 104px 98px 96px 117px 91px 101px 92px 97px 78px 122px 152px 124px 115px 20px 163px 129px; }
.marks div { display: flex; align-items: center; height: 29px; }
.marks svg { width: 14px; height: 14px; margin-right: 9px; }
.marks div:nth-child(2) svg { width: 16px; height: 16px; margin-right: 8px; }
.marks div:nth-child(12) { letter-spacing: .15px; }
.marks div:nth-child(13) svg { width: 16px; height: 16px; margin-right: 8px; }
.marks .sep::before { content: ""; width: 1px; height: 16px; background: #c4c7cb; margin-right: 11px; }
.marks .reading { color: #202124; }
.marks .sep.reading::before { margin-right: 11px; }
.marks .reading svg { width: 16px; height: 16px; margin-right: 8px; }

.view { flex: 1; display: flex; min-height: 0; margin-top: -1px; border-top: 1px solid #d3d6da; }
.page { flex: 1; display: flex; flex-direction: column; background: #f1f4fe; }
.appbar { height: 50px; background: #333941; display: flex; align-items: center; padding: 0 24px 0 16px; flex: none; }
.brand { color: #fff; font-size: 20px; width: 125px; }
.user { margin-left: auto; color: #999c9f; display: flex; align-items: center; gap: 4px; }
.dd { border: 4px solid transparent; border-top-color: #999c9f; border-bottom: 0; }
.body { flex: 1; display: flex; min-height: 0; }
.side { width: 200px; background: #212529; color: #909294; display: flex; flex-direction: column; flex: none; }
.side h6 { margin: 0; font-size: 12px; line-height: 18px; font-weight: 700; color: #585b5e; padding: 28px 16px 12px; }
.side a { display: flex; align-items: center; gap: 8px; height: 45px; padding: 0 16px; }
.side a.on { color: #fff; }
.chev { margin-left: auto; }
.side footer { margin-top: auto; height: 82px; background: #343a40; color: #e9ebed; padding: 9px 12px; display: flex; flex-direction: column; }
.side small { font-size: 11.200px; line-height: 21px; }
.side footer span { line-height: 16px; }
.side small em { line-height: 29px; }

main { flex: 1; display: grid; grid-template-columns: repeat(3, 1fr); gap: 24px; padding: 24px; align-content: start; }
.card { height: 66.400px; background: #00a5bb; border: 1px solid rgba(0,0,0,.12); border-radius: 5px; color: #fff; display: flex; align-items: center; padding: 0 22px 1px; box-shadow: 0 6px 36px rgba(30,35,60,.11); }
.card svg { margin: -2px 3px 0 0; }
.card b { background: #ffc814; color: #212529; font-size: 10.500px; line-height: 15px; height: 15px; border-radius: 8px; padding: 0 6px; margin: 3px 0 0 3.500px; }
.red, .green, .mapcard { grid-column: 1 / -1; }
.red { background: #f10040; }
.green { background: #00bf4d; }
.mapcard { background: #fff; border: 1px solid #dfe3ec; border-radius: 5px; padding: 20.400px 22px; box-shadow: 0 6px 36px rgba(30,35,60,.11); height: 560px; }
.map { position: relative; width: 1611px; height: 492px; }

.canvas path { vector-effect: non-scaling-stroke; }
.stream { fill: none; stroke: #a5d4ff; stroke-width: 2; stroke-linejoin: round; }
#roads { fill: none; stroke-linecap: round; stroke-linejoin: round; }
#roads path { --w: 4px; stroke-width: calc(var(--w) + var(--extra)); vector-effect: non-scaling-stroke; }
#roads .w2 { --w: 1.500px; }
#roads .w5 { --w: 4.800px; }
#roads .w6 { --w: 5.800px; }
#roads .w8 { --w: 8px; }
#roads .w10 { --w: 10px; }
.casing { --extra: 1.800px; stroke: #dadde2; }
.paved { --extra: 0px; stroke: #fff; }
.dual-c, .dual-f, .hw-c, .hw-f { fill: none; }
.dual-c { stroke: #dadde2; stroke-width: 18.500px; }
.dual-f { stroke: #fff; stroke-width: 17px; }
.hw-c { stroke: #f8dc86; stroke-width: 9.500px; }
.hw-f { stroke: #fff9ae; stroke-width: 8px; }
.canvas text { font-family: Roboto, sans-serif; }
.st text, .poi text { paint-order: stroke; stroke: #fff; stroke-width: 2.500px; stroke-linejoin: round; }
.st text { font-size: 10.700px; fill: #686e73; text-anchor: middle; letter-spacing: .3px; stroke: #f8f9fa; }
.st .start { text-anchor: start; }
.st .b { font-size: 12.500px; fill: #60666b; }
.st .hwt { font-size: 12.800px; fill: #7d4e1a; stroke: #fffbd8; letter-spacing: .1px; }
.st .rv { font-size: 14px; fill: #5878c8; stroke: none; }
.poi text { font-size: 14px; }
.poi .s { font-size: 11.200px; }
.e text, .poi .end { text-anchor: end; }
.gray { fill: #949aa1; color: #949aa1; } .gray text { fill: #7b8187; }
.orange { fill: #ff9800; color: #ff9800; } .orange text { fill: #e06b00; }
.purple { fill: #7e66cc; color: #7e66cc; } .purple text { fill: #6842c0; }
.teal { fill: #00bccd; color: #00bccd; } .teal text { fill: #009599; }
.red-p { fill: #fb4060; } .red-p text { fill: #ea0030; }
.slate { fill: #72909b; color: #72909b; } .slate text { fill: #547080; }
.blue { fill: #606cf5; color: #606cf5; } .blue text { fill: #3242dc; }
.pink { fill: #ff0092; color: #ff0092; } .pink text { fill: #f5007c; }
.grn { fill: #00c060; color: #00c060; } .grn text { fill: #009c50; }
.canvas .glogo text { font: 600 21px Lato, sans-serif; paint-order: stroke; stroke: #fff; stroke-width: 2px; }
.legal text { font-size: 10px; fill: #222; }

.types { position: absolute; left: 10px; top: 10px; height: 40px; display: flex; background: #fff; border-radius: 2px; box-shadow: 0 1px 4px rgba(0,0,0,.3); font-size: 18px; line-height: 41px; color: #565656; }
.types span { padding: 0 18px; width: 100px; }
.types .cur { color: #000; font-weight: 500; border-right: 1px solid #e6e6e6; width: 68px; padding: 0 17px; }
.ctl { position: absolute; right: 10px; width: 40px; background: #fff; border-radius: 2px; box-shadow: 0 1px 4px rgba(0,0,0,.3); display: grid; place-items: center; }
.full { top: 10px; height: 40px; }
.man { top: 323px; height: 40px; }
.zoom { top: 395px; height: 81px; grid-template-rows: 40px 1px 40px; }
.zoom i { width: 30px; height: 1px; background: #e6e6e6; }

.scroll { width: 15px; background: #f1f1f1; display: flex; flex-direction: column; align-items: center; padding: 6px 0 5px; }
.up { border: 4px solid transparent; border-bottom-color: #a0a0a0; border-top: 0; }
.down { border: 4px solid transparent; border-top-color: #505050; border-bottom: 0; margin-top: auto; }
.thumb { width: 11px; height: 717px; background: #c1c1c1; margin-top: 5px; }
```
